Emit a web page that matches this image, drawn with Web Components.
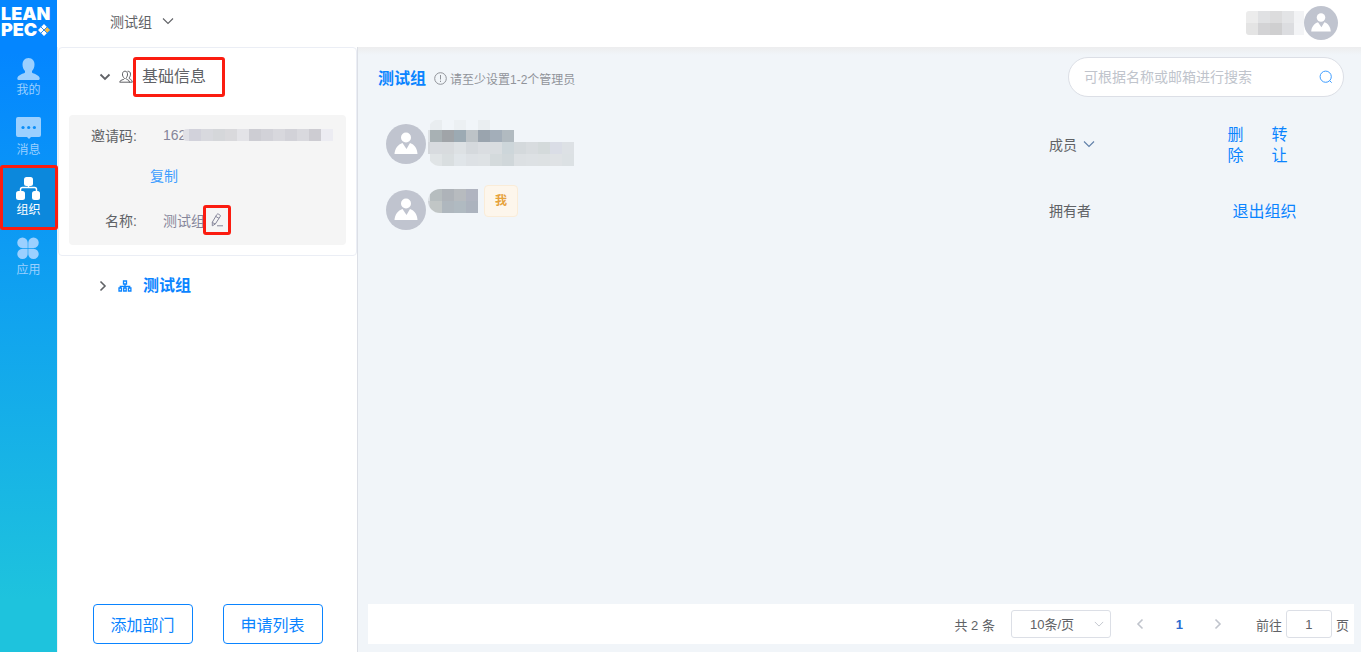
<!DOCTYPE html>
<html lang="zh-CN">
<head>
<meta charset="UTF-8">
<title>组织</title>
<style>
    html, body {
        margin: 0;
        height: 100%;
    }
    body {
        font-family: "Liberation Sans", "Noto Sans CJK SC", sans-serif;
        font-size: 14px;
        color: #606266;
        --blue: #0a84ff;
        --frame: #fb1c10;
        --line: #dcdfe6;
    }
</style>
</head>
<body>
<org-app>
    <side-nav slot="nav">
        <nav-item icon="user">我的</nav-item>
        <nav-item icon="chat">消息</nav-item>
        <nav-item icon="org" active>组织</nav-item>
        <nav-item icon="apps">应用</nav-item>
    </side-nav>
    <top-bar slot="top">测试组</top-bar>
    <org-panel slot="panel"></org-panel>
    <member-panel>
        <member-row>
            <pixel-block slot="name" shape="member"></pixel-block>
            <role-menu slot="role">成员</role-menu>
            <text-action slot="actions" narrow>删除</text-action>
            <text-action slot="actions" narrow>转让</text-action>
        </member-row>
        <member-row>
            <pixel-block slot="name" shape="owner"></pixel-block>
            <self-tag slot="name">我</self-tag>
            <span slot="role">拥有者</span>
            <text-action slot="actions">退出组织</text-action>
        </member-row>
        <page-bar slot="footer"></page-bar>
    </member-panel>
</org-app>

<script>
const icons = {
    user: [26, 26, '<path fill="currentColor" d="M12.500 2c4 0 6 3 6 6.500 0 3-1 5-2.500 6.500v1.500c0 1 6 1.500 7.500 5 .5 1.500 0 2.500-1 2.500h-20c-1 0-1.500-1-1-2.500 1.500-3.500 7.500-4 7.500-5V15c-1.500-1.500-2.500-3.500-2.500-6.500 0-3.500 2-6.500 6-6.500z"/>'],
    chat: [26, 26, '<path fill="currentColor" fill-rule="evenodd" d="M2 1h21a2 2 0 0 1 2 2v16a2 2 0 0 1-2 2h-8l-2 2-2-2H2a2 2 0 0 1-2-2V3a2 2 0 0 1 2-2z"/><g fill="#0c8ef8"><circle cx="7" cy="11.500" r="1.600"/><circle cx="12.700" cy="11.500" r="1.600"/><circle cx="18.400" cy="11.500" r="1.600"/></g>'],
    org: [26, 26, '<g fill="currentColor"><rect x="8" y="1" width="9" height="9" rx="2.500"/><rect x="0" y="15" width="9" height="9" rx="2.500"/><rect x="16" y="15" width="8" height="9" rx="2.500"/></g><path d="M12.500 9v3M4.500 16v-2.500q0-2 2-2h12q2 0 2 2V16" fill="none" stroke="currentColor" stroke-width="1.500"/>'],
    apps: [26, 26, '<path fill="currentColor" d="M6.500 1.500a5.200 5.200 0 0 1 5.200 5.200V12H6.500a5.200 5.200 0 0 1 0-10.500zM17.500 1.500a5.200 5.200 0 0 1 0 10.500h-5.200V6.700a5.200 5.200 0 0 1 5.200-5.200zM6.500 12.700h5.200V18a5.200 5.200 0 1 1-5.200-5.300zM12.300 12.700h5.200a5.200 5.200 0 1 1-5.200 5.300z"/>'],
    down: [12, 12, '<path d="M1 3.500l5 5 5-5" fill="none" stroke="currentColor" stroke-width="1.100"/>'],
    caret: [12, 12, '<path d="M1.500 3.500L6 8l4.500-4.500" fill="none" stroke="currentColor" stroke-width="1.800"/>'],
    next: [12, 12, '<path d="M3.500 1.500L8 6l-4.500 4.500" fill="none" stroke="currentColor" stroke-width="1.600"/>'],
    prev: [12, 12, '<path d="M8.500 1.500L4 6l4.500 4.500" fill="none" stroke="currentColor" stroke-width="1.600"/>'],
    people: [14, 14, '<path d="M5.500 8.500C4 7 3.300 5.500 3.500 3.800 3.700 2 4.700 1.200 6 1.200S8.300 2 8.500 3.800C8.700 5.500 8 7 6.800 8.500c0 1 3.700 1 3.700 3.700H.7c0-2.700 4.800-2.200 4.800-3.700zM8.500 1.300c2-.2 3 1 3 2.800 0 1.500-.5 2.700-1.500 3.900 0 1.200 3.300 1.200 3.300 4.200H10" fill="none" stroke="currentColor"/>'],
    tree: [14, 14, '<path d="M5.500 2h3v3h-3zM1 9h2.500v3H1zM5.700 9h2.500v3H5.700zM10.400 9h2.500v3h-2.500zM7 5v4M2.300 9V7.300h9.400V9" fill="none" stroke="currentColor" stroke-width="1.300"/>'],
    pencil: [14, 14, '<path d="M6.800 1.600q.6-1 1.600-.5l1.400.8q1 .6.4 1.600L5.300 11l-3 1.800V9.200zM5.700 3.400L9 5.300M2.300 9.400l2.900 1.700M7 12.800h6" fill="none" stroke="currentColor"/>'],
    info: [13, 13, '<circle cx="6.500" cy="6.500" r="5.800" fill="none" stroke="currentColor"/><path d="M6.500 3v4.500M6.500 8.700v1.300" stroke="currentColor"/>'],
    search: [14, 14, '<circle cx="6.700" cy="6.700" r="5.600" fill="none" stroke="currentColor"/><path d="M10.700 10.700l2 2" stroke="currentColor"/>'],
    avatar: [40, 40, '<circle cx="20" cy="20" r="20" fill="#c0c4cf"/><circle cx="20" cy="13.500" r="5" fill="#fff"/><path fill="#fff" d="M8.500 30c.3-5.500 3.500-9.500 8-11l4 6 3.500-6c4.500 1.500 7.300 5.500 7.500 11z"/>']
};

// [width, height, left corner radius, [x, y, row of 12px cells]...]
const mosaics = {
    account: [58, 24, 3, [0, 0, 'ececec e0e1e3 dcdcdd e3e4e6 f2f3f5'], [0, 12, 'e4e4e4 d3d3d5 cfcfd0 dcdde0 f3f4f6']],
    code: [150, 12, 4, [-6, 0, 'e0e0e6 d2d2db d8d9de d5d7da d9d9dc e3e3e7 cdcdd3 d2d2d8 d8d8dd d2d2d8 d9d9de cdccd2 ececf2']],
    member: [146, 47, 12, [2, 1, 'e9edf0 f1f5f9 ecf0f3 f1f5f9 eaeef1'], [-10, 11, 'dde1e4 a8b1b4 a0a4a8 9caab3 bdc3c7 9aa4ae a3aeb9 b1bac0'],
        [-10, 23, 'd5d8dc d8dbdf d8dbde dde1e4 d5d9dd dadde1 d9dde0 cdd6da d4d9dc d8dcdf d4dadb dadde6 dde1e5'],
        [2, 35, 'e0e4e6 d9dee0 e0e5e9 dde1e5 dee2e5 d4dadc d0d7da dce0e3 dde1e4 dde1e3 dfe2e5 dce1e4']],
    owner: [50, 24, 12, [-10, 0, 'dde1e5 b6bdbf aeb3b9 b7bbbf b0b4c0'], [-10, 12, 'cdd1d5 c1c6c6 afb7be b0bac1 acb3be']]
};

class BaseElement extends HTMLElement {
    constructor() {
        super();
        this.attachShadow({ mode: 'open' });
    }

    connectedCallback() {
        this.shadowRoot.innerHTML = `
            <style>
                :host { display: block; box-sizing: border-box; }
                * { box-sizing: border-box; }
                button, input, select { font: inherit; color: inherit; margin: 0; }
                button { background: none; border: 0; padding: 0; cursor: pointer; }
                a { text-decoration: none; color: inherit; }
                ${this.styles()}
            </style>
            ${this.render()}
        `;
    }

    styles() { return ''; }
    render() { return '<slot></slot>'; }
}

class AppIcon extends BaseElement {
    styles() {
        return ':host { display: inline-flex; flex: none; } svg { display: block; }';
    }
    render() {
        const [w, h, body] = icons[this.getAttribute('name')];
        const size = this.getAttribute('size') || w;
        return `<svg width="${size}" height="${size * h / w}" viewBox="0 0 ${w} ${h}" aria-hidden="true">${body}</svg>`;
    }
}

class PixelBlock extends BaseElement {
    styles() {
        const radius = mosaics[this.getAttribute('shape')][2];
        return `:host { display: inline-flex; flex: none; }
            svg { display: block; border-radius: ${radius}px 0 0 ${radius}px; }`;
    }
    render() {
        const [w, h, , ...rows] = mosaics[this.getAttribute('shape')];
        const cells = rows.map(([x, y, colors]) => colors.split(' ').map((color, i) =>
            `<rect x="${x + i * 12}" y="${y}" width="12" height="12" fill="#${color}"/>`).join('')).join('');
        return `<svg width="${w}" height="${h}" shape-rendering="crispEdges" aria-hidden="true">${cells}</svg>`;
    }
}

// red highlight drawn over the slotted content
class RedFrame extends BaseElement {
    styles() {
        return `
            :host { display: inline-flex; align-items: center; position: relative; }
            :host::after {
                content: "";
                position: absolute;
                inset: 0;
                border: 3px solid var(--frame);
                border-radius: 3px;
                pointer-events: none;
            }
        `;
    }
}

class OrgApp extends BaseElement {
    styles() {
        return `
            :host { display: flex; min-height: 100vh; }
            .page { flex: 1; display: flex; flex-direction: column; min-width: 0; }
            .body { flex: 1; display: flex; }
            ::slotted(member-panel) { flex: 1; }
        `;
    }
    render() {
        return `
            <slot name="nav"></slot>
            <div class="page">
                <slot name="top"></slot>
                <div class="body"><slot name="panel"></slot><slot></slot></div>
            </div>
        `;
    }
}

class SideNav extends BaseElement {
    styles() {
        return `
            :host {
                flex: none;
                width: 57px;
                background: linear-gradient(#0486ff, #0486ff 8%, #1ec3dd 92%);
                z-index: 1;
            }
            .logo {
                display: flex;
                align-items: flex-end;
                height: 48px;
                padding: 0 0 10px 1px;
                color: #fff;
                font: 900 18px/16px Inter, sans-serif;
            }
            .logo svg { flex: none; margin: 0 0 2px -12px; }
        `;
    }
    render() {
        return `
            <div class="logo">
                <span>LEAN<br>PEC</span>
                <svg width="12" height="12" viewBox="0 0 12 12" aria-hidden="true">
                    <path fill="#fff" d="M6 0l3 3-3 3-3-3zM3 3l3 3-3 3-3-3zM6 6l3 3-3 3-3-3z"/>
                    <path fill="#f5b947" d="M9 3l3 3-3 3-3-3z"/>
                    <path d="M3 3l6 6M9 3L3 9" stroke="#2f8be8"/>
                </svg>
            </div>
            <nav><slot></slot></nav>
        `;
    }
}

class NavItem extends BaseElement {
    styles() {
        return `
            :host { height: 60px; color: #9bd0ff; position: relative; }
            :host([active]) { color: #fff; background: #0c88dc; }
            /* the frame is wider than the item, so it covers its edges */
            :host([active])::after {
                content: "";
                position: absolute;
                inset: -3px -1px -2px 0;
                border: 3px solid var(--frame);
                border-radius: 3px;
            }
            a {
                display: flex;
                flex-direction: column;
                align-items: center;
                padding-top: 8px;
                font-size: 12px;
                line-height: 16px;
            }
        `;
    }
    render() {
        return `<a href="#"><app-icon name="${this.getAttribute('icon')}"></app-icon><slot></slot></a>`;
    }
}

class TopBar extends BaseElement {
    styles() {
        return `
            :host {
                display: flex;
                justify-content: space-between;
                align-items: center;
                height: 47px;
                padding: 0 23px 2px 53px;
                background: #fff;
            }
            button { display: flex; align-items: center; gap: 10px; padding-bottom: 3px; }
            .account { display: flex; align-items: center; }
        `;
    }
    render() {
        return `
            <button type="button"><slot></slot><app-icon name="down"></app-icon></button>
            <div class="account">
                <pixel-block shape="account"></pixel-block>
                <app-icon name="avatar" size="34"></app-icon>
            </div>
        `;
    }
}

class OrgPanel extends BaseElement {
    styles() {
        return `
            :host {
                display: flex;
                flex-direction: column;
                flex: none;
                width: 301px;
                border: solid #dcdfe6;
                border-width: 0 1px;
                border-left-color: #f0f2f5;
                background: #fff;
            }
            .card {
                border: 1px solid #ebeef5;
                border-radius: 4px;
                padding: 9px 10px 10px;
            }
            .head { display: flex; align-items: center; height: 40px; padding-left: 30px; font-size: 16px; }
            .head app-icon[name="people"] { margin-left: 8px; }
            .head red-frame { height: 40px; width: 92px; padding-left: 9px; line-height: 20px; }
            .info {
                margin-top: 18px;
                padding-bottom: 5px;
                border-radius: 4px;
                background: #f5f5f5;
            }
            dl { margin: 0; }
            .row { display: flex; align-items: center; height: 40px; }
            dt { width: 68px; text-align: right; margin-right: 26px; }
            dd { margin: 0; display: flex; align-items: center; color: #85869a; }
            dd pixel-block { margin-left: -3px; }
            .copy { display: flex; align-items: center; height: 40px; margin: 0 0 5px 81px; color: #409eff; }
            red-frame.edit { width: 28px; height: 30px; margin-left: -2px; justify-content: center; }
            .edit button { display: flex; }
            .tree { display: flex; align-items: center; gap: 9px; padding: 18px 39px; color: var(--blue); font-size: 16px; font-weight: bold; }
            .tree button { display: flex; color: #606266; }
            .tree a { margin-left: 2px; line-height: 24px; }
            .buttons { display: flex; justify-content: center; gap: 30px; margin-top: auto; padding-bottom: 8px; }
            .buttons button {
                width: 100px;
                height: 40px;
                border: 1px solid var(--blue);
                border-radius: 4px;
                color: var(--blue);
                font-size: 16px;
            }
        `;
    }
    render() {
        return `
            <section class="card">
                <div class="head">
                    <app-icon name="caret"></app-icon>
                    <app-icon name="people"></app-icon>
                    <red-frame>基础信息</red-frame>
                </div>
                <div class="info">
                    <dl>
                        <div class="row"><dt>邀请码:</dt><dd>162<pixel-block shape="code"></pixel-block></dd></div>
                    </dl>
                    <button class="copy" type="button">复制</button>
                    <dl>
                        <div class="row">
                            <dt>名称:</dt>
                            <dd>测试组<red-frame class="edit"><button type="button" aria-label="编辑"><app-icon name="pencil"></app-icon></button></red-frame></dd>
                        </div>
                    </dl>
                </div>
            </section>
            <div class="tree">
                <button type="button" aria-label="展开"><app-icon name="next"></app-icon></button>
                <app-icon name="tree"></app-icon>
                <a href="#">测试组</a>
            </div>
            <div class="buttons">
                <button type="button">添加部门</button>
                <button type="button">申请列表</button>
            </div>
        `;
    }
}

class MemberPanel extends BaseElement {
    styles() {
        return `
            :host {
                display: flex;
                flex-direction: column;
                padding: 0 7px 8px 10px;
                background: linear-gradient(#ededee, #f1f5f9 8px);
            }
            header { display: flex; align-items: center; padding: 10px 10px 0; }
            h1 { margin: 0 8px 0 0; font-size: 16px; color: var(--blue); }
            .note { display: flex; align-items: center; gap: 3px; padding-top: 2px; font-size: 12px; color: #909399; }
            search-box { margin-left: auto; }
            .rows { flex: 1; padding-top: 14px; }
        `;
    }
    render() {
        return `
            <header>
                <h1>测试组</h1>
                <span class="note"><app-icon name="info"></app-icon>请至少设置1-2个管理员</span>
                <search-box></search-box>
            </header>
            <div class="rows"><slot></slot></div>
            <slot name="footer"></slot>
        `;
    }
}

class SearchBox extends BaseElement {
    styles() {
        return `
            :host {
                display: flex;
                align-items: center;
                width: 276px;
                height: 40px;
                padding: 0 10px 0 15px;
                border: 1px solid var(--line);
                border-radius: 20px;
                background: #fff;
            }
            input { flex: 1; min-width: 0; border: 0; padding: 0; outline: 0; background: none; }
            input::placeholder { color: #c0c4cc; }
            button { display: flex; color: #409eff; }
        `;
    }
    render() {
        return `
            <input type="text" aria-label="搜索成员" placeholder="可根据名称或邮箱进行搜索">
            <button type="button" aria-label="搜索"><app-icon name="search"></app-icon></button>
        `;
    }
}

class MemberRow extends BaseElement {
    styles() {
        return `
            :host {
                display: grid;
                grid-template-columns: 1fr 166px 139px;
                align-items: center;
                height: 66px;
                padding-left: 18px;
            }
            .name { display: flex; align-items: center; gap: 2px; height: 66px; }
            .text { display: flex; align-items: center; align-self: flex-start; gap: 6px; margin-top: 8px; }
            .actions { display: flex; justify-content: center; gap: 14px; padding: 2px 40px 0 0; }
        `;
    }
    render() {
        return `
            <div class="name">
                <app-icon name="avatar"></app-icon>
                <div class="text"><slot name="name"></slot></div>
            </div>
            <div><slot name="role"></slot></div>
            <div class="actions"><slot name="actions"></slot></div>
        `;
    }
}

class RoleMenu extends BaseElement {
    styles() {
        return 'button { display: flex; align-items: center; gap: 6px; } app-icon { color: #5f7fa8; }';
    }
    render() {
        return '<button type="button"><slot></slot><app-icon name="down"></app-icon></button>';
    }
}

class TextAction extends BaseElement {
    styles() {
        return `
            button { color: var(--blue); font-size: 16px; line-height: 21px; white-space: nowrap; }
            :host([narrow]) { padding-right: 14px; }
            :host([narrow]) button { width: 16px; white-space: normal; }
        `;
    }
    render() {
        return '<button type="button"><slot></slot></button>';
    }
}

class SelfTag extends BaseElement {
    styles() {
        return `
            :host {
                height: 32px;
                padding: 0 10px;
                border: 1px solid #faecd8;
                border-radius: 4px;
                background: #fdf6ec;
                color: #e6a23c;
                font-size: 12px;
                font-weight: bold;
                line-height: 30px;
            }
        `;
    }
}

class PageBar extends BaseElement {
    styles() {
        return `
            :host {
                display: flex;
                justify-content: flex-end;
                align-items: center;
                height: 40px;
                padding-right: 5px;
                background: #fff;
                font-size: 13px;
            }
            .size { position: relative; display: flex; align-items: center; margin: 0 10px 0 16px; }
            .size app-icon { position: absolute; right: 7px; color: #c0c4cc; pointer-events: none; }
            select, input {
                height: 28px;
                border: 1px solid var(--line);
                border-radius: 3px;
                background: #fff;
            }
            select { appearance: none; width: 100px; padding: 0 18px; }
            input { width: 46px; margin: 0 4px; padding: 0; text-align: center; }
            .pages { display: flex; align-items: center; margin-right: 18px; }
            .pages button { display: flex; justify-content: center; width: 39px; color: #c0c4cc; }
            .pages .current { color: #2a6bd0; font-weight: bold; }
            .jump { display: flex; align-items: center; }
        `;
    }
    render() {
        return `
            <span>共 2 条</span>
            <div class="size">
                <select aria-label="每页条数"><option>10条/页</option></select>
                <app-icon name="down" size="10"></app-icon>
            </div>
            <div class="pages">
                <button type="button" aria-label="上一页"><app-icon name="prev"></app-icon></button>
                <button type="button" class="current">1</button>
                <button type="button" aria-label="下一页"><app-icon name="next"></app-icon></button>
            </div>
            <label class="jump">前往<input type="text" value="1">页</label>
        `;
    }
}

customElements.define('app-icon', AppIcon);
customElements.define('pixel-block', PixelBlock);
customElements.define('red-frame', RedFrame);
customElements.define('org-app', OrgApp);
customElements.define('side-nav', SideNav);
customElements.define('nav-item', NavItem);
customElements.define('top-bar', TopBar);
customElements.define('org-panel', OrgPanel);
customElements.define('member-panel', MemberPanel);
customElements.define('search-box', SearchBox);
customElements.define('member-row', MemberRow);
customElements.define('role-menu', RoleMenu);
customElements.define('text-action', TextAction);
customElements.define('self-tag', SelfTag);
customElements.define('page-bar', PageBar);
</script>
</body>
</html>
